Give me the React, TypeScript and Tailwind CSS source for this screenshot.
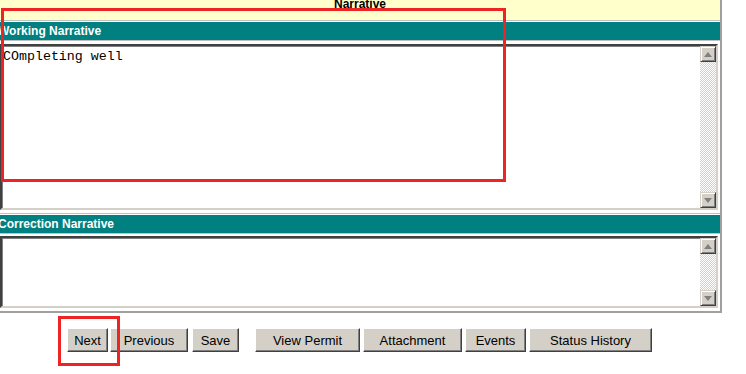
import type { ReactNode } from 'react';

// ── Sub-components ─────────────────────────────────────

function Arrow({ dir }: { dir: 'up' | 'down' }) {
  return (
    <div className="w-[16px] h-[16px] bg-[#d4d0c8] border border-t-[#d4d0c8] border-l-[#d4d0c8] border-b-[#404040] border-r-[#404040] shadow-[inset_1px_1px_#ffffff,inset_-1px_-1px_#808080] flex items-center justify-center">
      <svg width="8" height="5" viewBox="0 0 8 5">
        {dir === 'up' ? (
          <polygon points="4,0 8,5 0,5" fill="#808080" />
        ) : (
          <polygon points="0,0 8,0 4,5" fill="#808080" />
        )}
      </svg>
    </div>
  );
}

function TextBox({ height, children }: { height: number; children?: ReactNode }) {
  return (
    <div
      className="w-[718px] flex bg-white border-2 border-t-[#404040] border-l-[#404040] border-b-[#d4d0c8] border-r-[#d4d0c8] shadow-[inset_1px_1px_#808080]"
      style={{ height }}
    >
      <div className="flex-1 pl-[1px] pt-[3px] font-['Liberation_Mono',monospace] text-[13.3px] leading-[15px] text-black whitespace-pre">
        {children}
      </div>
      <div className="w-[16px] flex flex-col">
        <Arrow dir="up" />
        <div className="flex-1 bg-[conic-gradient(#d4d0c8_25%,#ffffff_0_50%,#d4d0c8_0_75%,#ffffff_0)] bg-[length:2px_2px]" />
        <Arrow dir="down" />
      </div>
    </div>
  );
}

function SectionBar({ label }: { label: string }) {
  return (
    <div className="h-[18px] bg-[#008080] flex items-center -ml-[2px] font-['Liberation_Sans',Arial,sans-serif] font-bold text-[12px] text-white">
      {label}
    </div>
  );
}

function Btn({ label, width, className = '' }: { label: string; width: number; className?: string }) {
  return (
    <button
      className={`h-[24px] bg-[#d4d0c8] border border-t-white border-l-white border-b-[#404040] border-r-[#404040] shadow-[inset_-1px_-1px_#808080] font-['Liberation_Sans',Arial,sans-serif] text-[13px] text-black leading-none flex items-center justify-center ${className}`}
      style={{ width }}
    >
      {label}
    </button>
  );
}

// ── Main Component ─────────────────────────────────────

export default function App() {
  return (
    <div className="relative w-[746px] h-[374px] bg-white overflow-hidden">
      {/* narrative table */}
      <div className="w-[722px] border-r-2 border-b-2 border-[#a0a0a0] pb-[3px]">
        <div className="h-[21px] bg-[#ffffcc] border-b border-[#c0c0c0] overflow-hidden">
          <div className="-mt-[5px] text-center font-['Liberation_Sans',Arial,sans-serif] font-bold text-[12px] text-black">
            Narrative
          </div>
        </div>
        <div className="h-[1px]" />
        <div className="border-b border-[#c0c0c0]">
          <SectionBar label="Working Narrative" />
        </div>
        <div className="pt-[3px] pb-[3px] border-b border-[#c0c0c0]">
          <TextBox height={166}>COmpleting well</TextBox>
        </div>
        <div className="h-[1px]" />
        <div className="border-b border-[#c0c0c0]">
          <SectionBar label="Correction Narrative" />
        </div>
        <div className="pt-[2px]">
          <TextBox height={72} />
        </div>
      </div>

      {/* buttons */}
      <div className="flex pl-[67px] pt-[15px]">
        <Btn label="Next" width={41} />
        <Btn label="Previous" width={78} className="ml-[2px]" />
        <Btn label="Save" width={47} className="ml-[4px]" />
        <Btn label="View Permit" width={105} className="ml-[16px]" />
        <Btn label="Attachment" width={99} className="ml-[3px]" />
        <Btn label="Events" width={61} className="ml-[3px]" />
        <Btn label="Status History" width={123} className="ml-[3px]" />
      </div>

      {/* red annotation marks */}
      <div className="absolute left-[1px] top-[8px] w-[505px] h-[174px] border-[3px] border-[#ee2424] pointer-events-none" />
      <div className="absolute left-[58px] top-[316px] w-[62px] h-[50px] border-[3px] border-[#ee2424] pointer-events-none" />
    </div>
  );
}
